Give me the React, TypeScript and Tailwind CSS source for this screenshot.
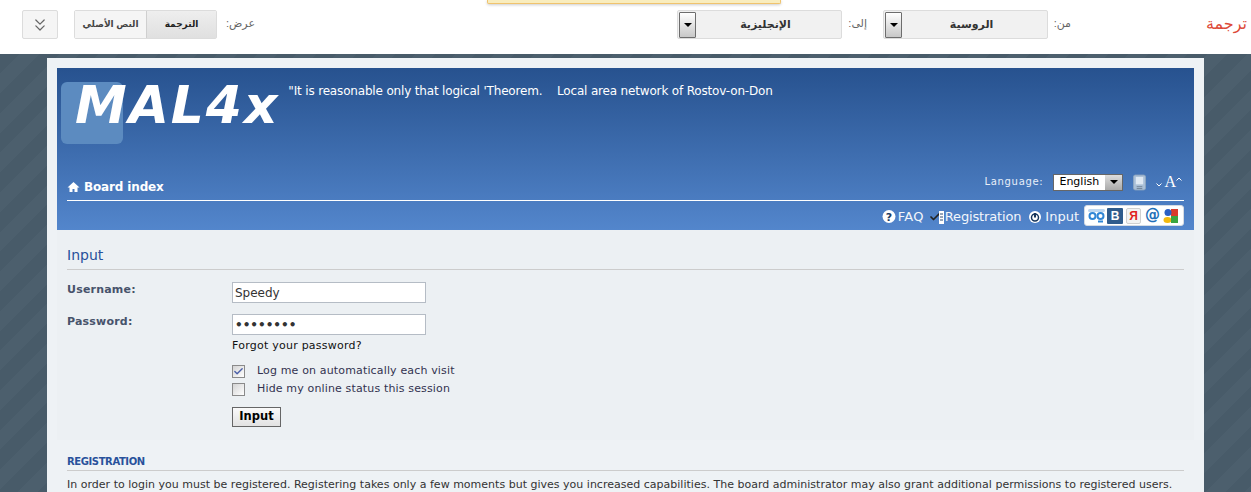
import { Check, ChevronsDown } from "lucide-react";

const arabic = "font-['Liberation_Sans','DejaVu_Sans',sans-serif]";

function ArrowBox({ className }: { className: string }) {
  return (
    <span className={`flex items-center justify-center border border-[#6d6d6d] ${className}`}>
      <span className="h-0 w-0 border-x-[4px] border-t-[4px] border-x-transparent border-t-black" />
    </span>
  );
}

function LangSelect({ label }: { label: string }) {
  return (
    <div className="flex h-[29px] w-[165px] items-center rounded-[2px] border border-[#dcdcdc] bg-[#f1f1f1] p-px">
      <ArrowBox className="h-[26px] w-[17px] shrink-0 rounded-[1px] bg-gradient-to-b from-[#ffffff] to-[#c8c8c8]" />
      <span dir="rtl" className={`flex-1 pr-[5px] text-center text-[11px] font-bold text-[#333] ${arabic}`}>
        {label}
      </span>
    </div>
  );
}

function TopBar() {
  return (
    <header className="relative flex h-[54px] items-start bg-white pt-[10px]">
      <div className="absolute left-[487px] top-0 h-[4px] w-[294px] rounded-b-[2px] border-x border-b border-[#f0c36d] bg-[#f9edbe] shadow-[0_1px_3px_rgba(0,0,0,0.2)]" />
      <button className="ml-[22px] flex h-[29px] w-[36px] items-center justify-center rounded-[2px] border border-[#dcdcdc] bg-[#f5f5f5] text-[#666]">
        <ChevronsDown size={20} strokeWidth={1.5} />
      </button>
      <div className="ml-[16px] flex h-[29px] w-[143px] rounded-[2px] border border-[#dcdcdc] text-[9px] font-bold">
        <span dir="rtl" className={`flex w-[71px] items-center justify-center bg-[#f5f5f5] text-[#444] ${arabic}`}>
          النص الأصلي
        </span>
        <span dir="rtl" className={`flex flex-1 items-center justify-center border-l border-[#cfcfcf] bg-gradient-to-b from-[#eeeeee] to-[#e0e0e0] text-[#222] ${arabic}`}>
          الترجمة
        </span>
      </div>
      <span dir="rtl" className={`ml-[7px] mt-[5px] w-[31px] text-[11px] text-[#666] ${arabic}`}>
        عرض:
      </span>
      <div className="ml-[422px]">
        <LangSelect label="الإنجليزية" />
      </div>
      <span dir="rtl" className={`ml-[8px] mt-[5px] w-[17px] text-[11px] text-[#666] ${arabic}`}>
        إلى:
      </span>
      <div className="ml-[16px]">
        <LangSelect label="الروسية" />
      </div>
      <span dir="rtl" className={`ml-[6px] mt-[5px] w-[17px] text-[11px] text-[#666] ${arabic}`}>
        من:
      </span>
      <span dir="rtl" className={`ml-[134px] mt-[3px] w-[42px] text-[16px] leading-[22px] text-[#dd4b39] ${arabic}`}>
        ترجمة
      </span>
    </header>
  );
}

function SocialIcons() {
  return (
    <div className="flex h-[21px] w-[100px] items-center gap-[3px] rounded-[3px] border border-[#d5dbe3] bg-white pl-[3px]">
      <svg width="17" height="16" viewBox="0 0 17 16">
        <rect x="0" y="1" width="17" height="3" rx="1.5" fill="#bcd6f0" />
        <circle cx="4.5" cy="8" r="3" fill="none" stroke="#2f86d6" strokeWidth="2" />
        <circle cx="12.5" cy="8" r="3" fill="none" stroke="#2f86d6" strokeWidth="2" />
        <path d="M10 13.5h5" stroke="#2f86d6" strokeWidth="2" />
      </svg>
      <span className="-ml-px flex h-[16px] w-[16px] items-center justify-center rounded-[1px] bg-[#2f5b8c] font-['Liberation_Sans',sans-serif] text-[12px] font-bold text-white">
        В
      </span>
      <span className="flex h-[16px] w-[15px] items-center justify-center rounded-[2px] border border-[#d0d0d0] bg-[#f3f3f3] font-['Liberation_Sans',sans-serif] text-[12px] font-bold text-[#e02020]">
        Я
      </span>
      <span className="ml-px font-['DejaVu_Sans',sans-serif] text-[15px] font-bold leading-none text-[#1f6fb8]">@</span>
      <svg width="16" height="16" viewBox="0 0 16 16">
        <path d="M8 1H15V8H8Z" fill="#d93a2b" />
        <circle cx="5" cy="4.500" r="3.500" fill="#2b5fc4" />
        <ellipse cx="4.500" cy="12" rx="4" ry="3" fill="#f2b90f" />
        <path d="M8 8H15V15H8Z" fill="#3aa53f" />
      </svg>
    </div>
  );
}

function Banner() {
  return (
    <div className="relative h-[162px] bg-gradient-to-b from-[#27528f] to-[#5386cc] text-white">
      <div className="absolute left-[4px] top-[14px] h-[62px] w-[62px] rounded-[6px] bg-[#5c8bc0]" />
      <div className="relative flex h-[110px] items-start">
        <span className="ml-[18px] mt-[6px] font-['DejaVu_Sans',sans-serif] text-[52px] font-bold italic leading-[62px] tracking-[1.9px]">
          MAL4x
        </span>
        <span className="ml-[9px] mt-[15px] whitespace-pre text-[12px] leading-[16px] tracking-[-0.17px]">
          "It is reasonable only that logical 'Theorem.    Local area network of Rostov-on-Don
        </span>
      </div>
      <div className="flex h-[18px] items-center px-[10px]">
        <svg width="13" height="12" viewBox="0 0 13 12" className="mr-[4px]">
          <path d="M6.500 1 12.500 6.500H10.500V11H7.500V8H5.500V11H2.500V6.500H.5Z" fill="white" />
        </svg>
        <span className="text-[12px] font-bold tracking-[-0.15px]">Board index</span>
        <div className="ml-auto flex -translate-y-[5px] items-center pr-[2px]">
          <span className="mr-[10px] -translate-y-px text-[10px] tracking-[0.7px] text-[#e8eef8]">Language:</span>
          <div className="mr-[10px] flex h-[17px] w-[70px] items-center border border-[#666] bg-white text-[11px] text-black">
            <span className="flex-1 pl-[5px]">English</span>
            <ArrowBox className="h-[15px] w-[17px] border-0 bg-gradient-to-b from-[#ddd] to-[#aaa]" />
          </div>
          <svg width="13" height="17" viewBox="0 0 14 17" className="mr-[10px]">
            <rect x=".5" y=".5" width="13" height="16" rx="2" fill="#a9bfd6" stroke="#8ea5bf" />
            <rect x="3" y="2.500" width="8" height="8" fill="#dfe9f3" />
            <path d="M4 13h6M4 15h6" stroke="#6f8296" />
          </svg>
          <svg width="6" height="4" viewBox="0 0 6 4" className="mt-[5px]">
            <path d="M.5.5 3 3 5.500.5" fill="none" stroke="white" />
          </svg>
          <span className="ml-[2px] font-['Liberation_Serif',serif] text-[16px] font-normal leading-none">A</span>
          <svg width="6" height="4" viewBox="0 0 6 4" className="mb-[6px]">
            <path d="M.5 3.500 3 1 5.500 3.500" fill="none" stroke="white" />
          </svg>
        </div>
      </div>
      <div className="mx-[10px] mt-[4px] h-px bg-white" />
      <div className="flex h-[29px] items-center justify-end pr-[10px]">
        <div className="flex items-center pt-[3px] text-[13px] text-[#f2f6fb]">
          <svg width="15" height="14" viewBox="0 0 15 14" className="mr-px">
            <circle cx="7" cy="6.500" r="6.500" fill="white" />
            <text x="7" y="10.500" textAnchor="middle" fontSize="11" fontWeight="700" fill="#1d3b62">?</text>
          </svg>
          <span className="mr-[5px] tracking-[0.3px]">FAQ</span>
          <Check size={12} strokeWidth={3.500} className="-mr-[2px] text-[#222]" />
          <svg width="5" height="13" viewBox="0 0 5 13" className="mr-px">
            <rect width="5" height="13" fill="white" />
            <path d="M1 3h3M1 6h3M1 9h3" stroke="#2a4a73" />
          </svg>
          <span className="mr-[8px] tracking-[-0.15px]">Registration</span>
          <svg width="12" height="12" viewBox="0 0 12 12" className="mr-[4px]">
            <circle cx="6" cy="6" r="6" fill="white" />
            <circle cx="6" cy="6.500" r="3.500" fill="none" stroke="#17365c" strokeWidth="1.500" />
            <path d="M6 2v4.500" stroke="#17365c" strokeWidth="2" />
          </svg>
          <span className="mr-[5px]">Input</span>
        </div>
        <SocialIcons />
      </div>
    </div>
  );
}

function CheckRow({ checked, label }: { checked?: boolean; label: string }) {
  return (
    <div className="flex h-[18px] items-center">
      <span className="flex h-[13px] w-[13px] items-center justify-center border border-[#8a8a8a] bg-gradient-to-br from-[#d4d4d4] to-white">
        {checked && <Check size={11} strokeWidth={3} className="text-[#4a5fa8]" />}
      </span>
      <span className="ml-[12px] text-[11px] tracking-[0.15px] text-[#333350]">{label}</span>
    </div>
  );
}

function LoginForm() {
  return (
    <section className="h-[210px] bg-[#ecf0f3] px-[10px] pt-[16px]">
      <h2 className="border-b border-[#cccccc] pb-[5px] text-[14px] leading-[18px] text-[#28519b]">Input</h2>
      <div className="mt-[12px] flex">
        <div className="w-[165px] pt-px text-[11px] font-bold tracking-[0.2px] text-[#47536b]">
          <div className="h-[32px] leading-[14px]">Username:</div>
          <div className="leading-[14px]">Password:</div>
        </div>
        <div>
          <input
            readOnly
            value="Speedy"
            className="block h-[21px] w-[194px] border border-[#b5bcc5] bg-white px-[2px] pt-px text-[12px] text-[#333]"
          />
          <input
            readOnly
            type="password"
            value="12345678"
            className="mt-[11px] block h-[21px] w-[194px] border border-[#b5bcc5] bg-white px-[2px] text-[12px] font-bold text-[#333]"
          />
          <div className="mt-[3px] text-[11px] leading-[15px] tracking-[0.24px] text-[#111]">Forgot your password?</div>
          <div className="mt-[9px]">
            <CheckRow checked label="Log me on automatically each visit" />
            <CheckRow label="Hide my online status this session" />
          </div>
          <button className="mt-[9px] block h-[20px] w-[49px] border border-[#666] bg-gradient-to-b from-[#fafafa] to-[#e2e2e2] text-[11.5px] font-bold text-black">
            Input
          </button>
        </div>
      </div>
    </section>
  );
}

export default function App() {
  return (
    <div className="h-[492px] overflow-hidden bg-white font-['DejaVu_Sans',sans-serif]">
      <TopBar />
      <div className="h-[438px] bg-[repeating-linear-gradient(135deg,#485b69_0px,#485b69_14px,#4c5f6d_14px,#4c5f6d_28px)] px-[47px] pt-[4px]">
        <div className="h-full bg-[#eef2f5] px-[10px] pt-[10px]">
          <Banner />
          <LoginForm />
          <section className="px-[10px] pt-[15px]">
            <h3 className="border-b border-[#cccccc] pb-px text-[10px] font-bold leading-[14px] tracking-[-0.4px] text-[#28519b]">REGISTRATION</h3>
            <p className="mt-[6px] whitespace-nowrap text-[11px] leading-[15px] tracking-[0.01px] text-[#333]">
              In order to login you must be registered. Registering takes only a few moments but gives you increased capabilities. The board administrator may also grant additional permissions to registered users.
            </p>
          </section>
        </div>
      </div>
    </div>
  );
}
